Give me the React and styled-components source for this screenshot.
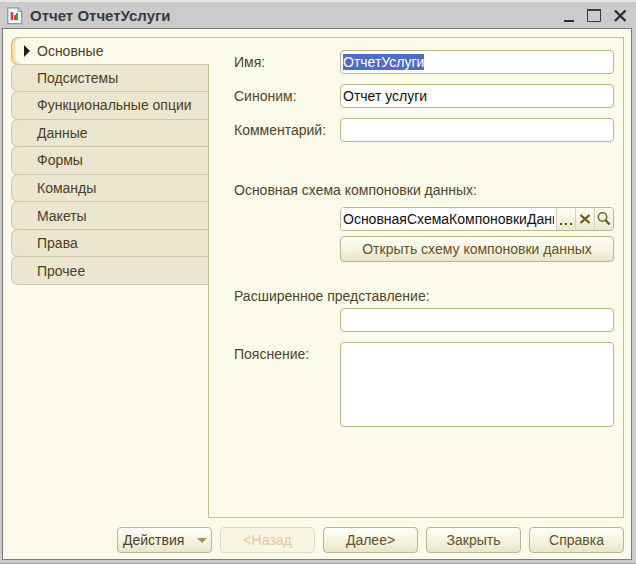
import React, { useEffect, useRef, useState } from "react";
import styled, { createGlobalStyle, css } from "styled-components";

const TABS = [
    "Основные",
    "Подсистемы",
    "Функциональные опции",
    "Данные",
    "Формы",
    "Команды",
    "Макеты",
    "Права",
    "Прочее",
];

export default function App() {
    const nameRef = useRef(null);
    const [activeTab, setActiveTab] = useState(TABS[0]);
    const [name, setName] = useState("ОтчетУслуги");
    const [synonym, setSynonym] = useState("Отчет услуги");
    const [schema, setSchema] = useState("ОсновнаяСхемаКомпоновкиДанных");

    useEffect(() => {
        nameRef.current.focus();
        nameRef.current.select();
    }, []);

    return (
        <Window>
            <GlobalStyle />
            <TitleBar>
                <ReportIcon />
                <Title>Отчет ОтчетУслуги</Title>
                <WindowButton type="button" aria-label="Свернуть">
                    <svg width="16" height="16" viewBox="0 0 16 16">
                        <path d="M4 13h10" stroke="#2e2e2e" strokeWidth="2" />
                    </svg>
                </WindowButton>
                <WindowButton type="button" aria-label="Развернуть">
                    <svg width="16" height="16" viewBox="0 0 16 16">
                        <path d="M1.5 2v11.500h13V2" fill="none" stroke="#3a3a3a" />
                        <path d="M1 2h14" stroke="#3a3a3a" strokeWidth="2" />
                    </svg>
                </WindowButton>
                <WindowButton type="button" aria-label="Закрыть окно">
                    <svg width="16" height="16" viewBox="0 0 16 16">
                        <path d="M3 2.500l10.500 10.500M13.500 2.500L3 13" stroke="#2e2e2e" strokeWidth="2.400" />
                    </svg>
                </WindowButton>
            </TitleBar>
            <Body>
                <Content>
                    <TabList role="tablist" aria-orientation="vertical">
                        {TABS.map((tab) => (
                            <Tab
                                key={tab}
                                type="button"
                                role="tab"
                                aria-selected={tab === activeTab}
                                $active={tab === activeTab}
                                onClick={() => setActiveTab(tab)}
                            >
                                <Marker>
                                    {tab === activeTab && (
                                        <svg width="6" height="12" viewBox="0 0 6 12">
                                            <path d="M0 0l6 6-6 6z" fill="#1e1c16" />
                                        </svg>
                                    )}
                                </Marker>
                                {tab}
                            </Tab>
                        ))}
                    </TabList>
                    <Panel role="tabpanel">
                        <Group>
                            <Label htmlFor="name">Имя:</Label>
                            <Input
                                id="name"
                                ref={nameRef}
                                value={name}
                                onChange={(e) => setName(e.target.value)}
                            />
                            <Label htmlFor="synonym">Синоним:</Label>
                            <Input
                                id="synonym"
                                value={synonym}
                                onChange={(e) => setSynonym(e.target.value)}
                            />
                            <Label htmlFor="comment">Комментарий:</Label>
                            <Input id="comment" />
                        </Group>
                        <Section $gap={5}>
                            <Label htmlFor="schema">Основная схема компоновки данных:</Label>
                            <Indented>
                                <Picker>
                                    <PickerInput
                                        id="schema"
                                        value={schema}
                                        onChange={(e) => setSchema(e.target.value)}
                                    />
                                    <PickerButton type="button" aria-label="Выбрать">
                                        <svg width="18" height="22" viewBox="0 0 18 22">
                                            <path d="M3 15h2v2H3zM8 15h2v2H8zM13 15h2v2h-2z" fill="#5f4a10" />
                                        </svg>
                                    </PickerButton>
                                    <PickerButton type="button" aria-label="Очистить">
                                        <svg width="18" height="22" viewBox="0 0 18 22">
                                            <path d="M4.500 7l9 8M13.500 7l-9 8" stroke="#6e5514" strokeWidth="2.200" />
                                        </svg>
                                    </PickerButton>
                                    <PickerButton type="button" aria-label="Открыть">
                                        <svg width="18" height="22" viewBox="0 0 18 22">
                                            <circle cx="7.500" cy="9" r="4.200" fill="none" stroke="#79602a" strokeWidth="1.500" />
                                            <path d="M10.500 12l4 4.500" stroke="#6e5514" strokeWidth="2.200" />
                                        </svg>
                                    </PickerButton>
                                </Picker>
                                <Button type="button">Открыть схему компоновки данных</Button>
                            </Indented>
                        </Section>
                        <Section $gap={0}>
                            <Label htmlFor="extended">Расширенное представление:</Label>
                            <Indented>
                                <Input id="extended" />
                            </Indented>
                        </Section>
                        <Group>
                            <Label htmlFor="explanation">Пояснение:</Label>
                            <TextArea id="explanation" />
                        </Group>
                    </Panel>
                </Content>
                <Footer>
                    <MenuButton type="button" aria-haspopup="menu">
                        Действия
                        <svg width="10" height="5" viewBox="0 0 10 5">
                            <path d="M0 0h10L5 5z" fill="#b08e5c" />
                        </svg>
                    </MenuButton>
                    <FooterButton type="button" disabled>&lt;Назад</FooterButton>
                    <FooterButton type="button">Далее&gt;</FooterButton>
                    <FooterButton type="button">Закрыть</FooterButton>
                    <FooterButton type="button">Справка</FooterButton>
                </Footer>
            </Body>
        </Window>
    );
}

function ReportIcon() {
    return (
        <svg width="16" height="18" viewBox="0 0 16 18" aria-hidden="true">
            <path d="M.8.800h10.700l3.200 3.200v12.700H.8z" fill="#f4f8fa" stroke="#8197a8" strokeWidth="1.200" />
            <path d="M11 1v3.500h3.500" fill="#d5e0e7" stroke="#8197a8" />
            <path d="M3.500 4.500v8.500h9" fill="none" stroke="#b9c7d0" />
            <path d="M4 5h2v8H4z" fill="#e8382e" />
            <path d="M7 8h2v5H7z" fill="#c9412f" />
            <path d="M9 6h2v7H9z" fill="#4c9a3c" />
        </svg>
    );
}

const GlobalStyle = createGlobalStyle`
    *, *::before, *::after {
        box-sizing: border-box;
    }
    body {
        margin: 0;
        background-color: #cbcbcb;
    }
    body, button, input, textarea {
        font-family: "Liberation Sans", Arial, sans-serif;
        font-size: 14px;
        line-height: 16px;
    }
    ::selection {
        background-color: rgba(78, 107, 196, 0.99);
        color: #fff;
    }
`;

const Window = styled.div`
    display: flex;
    flex-direction: column;
    min-height: 100vh;
    padding: 0 4px 3px 2px;
    background-color: #cbcbcb;
    border-top: 2px solid #e9e7e1;
    border-bottom: 1px solid #a3a3a3;
`;

const TitleBar = styled.header`
    display: flex;
    align-items: center;
    height: 26px;
    padding: 2px 4px 0 5px;
`;

const Title = styled.h1`
    flex: 1;
    margin: 0 0 0 7px;
    font-size: 15px;
    line-height: 16px;
    font-weight: bold;
    color: #3b3b3b;
`;

const WindowButton = styled.button`
    display: flex;
    padding: 0;
    margin-left: 10px;
    border: none;
    background: none;
`;

const Body = styled.main`
    display: flex;
    flex: 1;
    flex-direction: column;
    padding: 8px 7px 6px 8px;
    background-color: #fcfaeb;
    border: 1px solid #7c7c7c;
`;

const Content = styled.div`
    display: flex;
    flex: 1;
    align-items: stretch;
`;

const TabList = styled.div`
    display: grid;
    grid-auto-rows: 1fr;
    align-self: flex-start;
    width: 198px;
    height: 248px;
    margin-right: -1px;
    z-index: 1;
`;

const Tab = styled.button`
    display: flex;
    align-items: center;
    padding: 0 0 0 12px;
    margin-top: -1px;
    border: 1px solid #cfc8a8;
    border-right-color: #c3bb92;
    border-radius: 7px 0 0 7px;
    background-color: #ebe6cf;
    color: #4b4025;
    text-align: left;

    &:first-child {
        margin-top: 0;
    }

    ${({ $active }) =>
        $active &&
        css`
            border-color: #c3bb92;
            border-right: none;
            background-color: #fcfaeb;
            box-shadow: inset 3px 0 0 #fbdc9c;
        `}
`;

const Marker = styled.span`
    display: flex;
    width: 13px;
`;

const Panel = styled.section`
    display: flex;
    flex: 1;
    flex-direction: column;
    padding: 12px 9px 12px 25px;
    border: 1px solid #c3bb92;
`;

const Group = styled.div`
    display: grid;
    grid-template-columns: 106px 1fr;
    row-gap: 10px;
`;

const Section = styled.div`
    display: flex;
    flex-direction: column;
    gap: ${({ $gap }) => $gap}px;
    margin-top: 36px;

    & + & {
        margin-top: 22px;
    }
    & + ${Group} {
        margin-top: 10px;
    }
`;

const Indented = styled.div`
    display: flex;
    flex-direction: column;
    gap: 5px;
    margin-left: 106px;
`;

const Label = styled.label`
    padding: 4px 0;
    color: #4f4429;
    white-space: nowrap;
`;

const fieldBox = css`
    width: 100%;
    min-width: 0;
    border: 1px solid #bdb58b;
    border-radius: 4px;
    background-color: #fff;
`;

const Input = styled.input`
    ${fieldBox}
    height: 24px;
    padding: 0 2px;
    color: #111;
    outline: none;
`;

const TextArea = styled.textarea`
    ${fieldBox}
    height: 85px;
    padding: 3px;
    outline: none;
    resize: none;
`;

const Picker = styled.div`
    ${fieldBox}
    display: flex;
    height: 24px;
    overflow: hidden;
`;

const PickerInput = styled.input`
    flex: 1;
    min-width: 0;
    padding: 0 2px;
    border: none;
    color: #111;
    outline: none;
`;

const PickerButton = styled.button`
    display: flex;
    padding: 0;
    border: none;
    border-left: 1px solid #d8d2b4;
    background: linear-gradient(#fefdf4, #ece8d0);
`;

const Button = styled.button`
    height: 26px;
    padding: 0 8px;
    border: 1px solid #bdb58b;
    border-radius: 4px;
    background: linear-gradient(#fffffb, #f6f3e0 50%, #e9e5ca);
    color: #655223;
    white-space: nowrap;

    &:disabled {
        border-color: #dedabf;
        background: #f8f5e2;
        color: #e4c9a0;
    }
`;

const Footer = styled.footer`
    display: flex;
    justify-content: flex-end;
    gap: 8px;
    padding-top: 9px;
`;

const FooterButton = styled(Button)`
    width: 95px;
`;

const MenuButton = styled(FooterButton)`
    display: flex;
    align-items: center;
    justify-content: space-between;
    padding: 0 4px 0 5px;
    color: #4b4025;
`;
